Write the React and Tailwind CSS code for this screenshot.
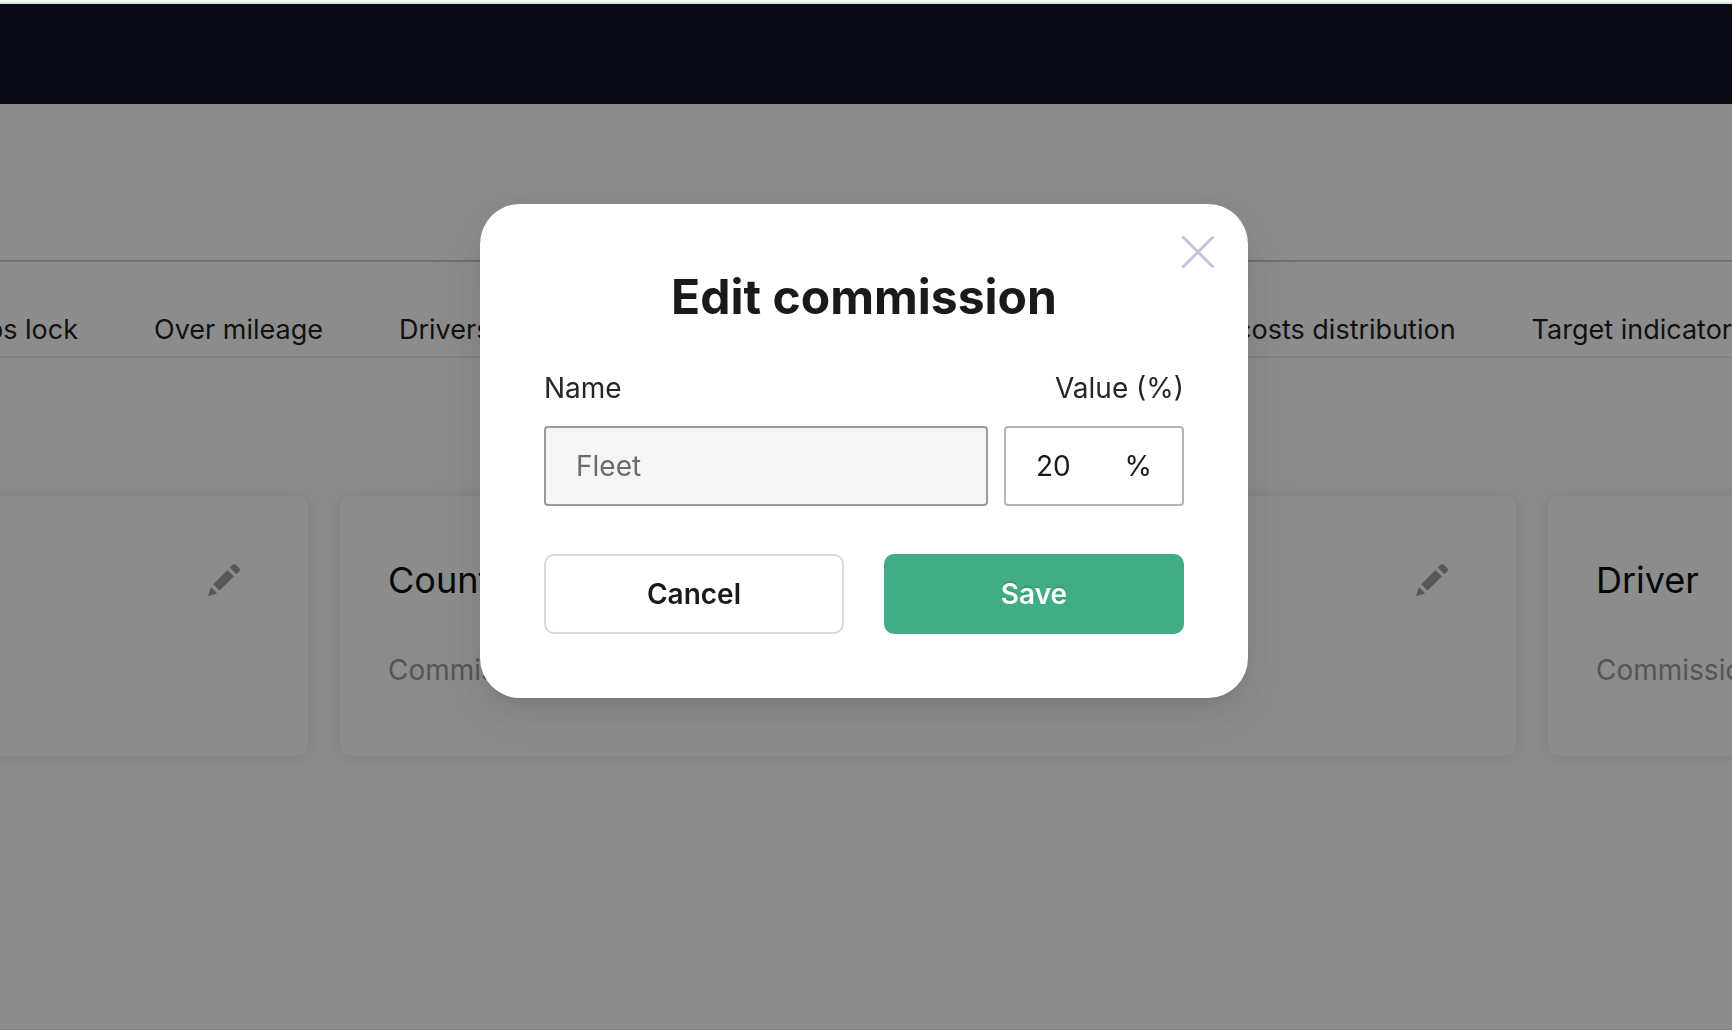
import { useState } from "react";

const leftTabs = ["Over mileage", "Drivers"];
const rightTabs = ["costs distribution", "Target indicator"];

function PencilIcon() {
  return (
    <svg viewBox="0 0 32 32" className="size-8 fill-[#9f9f9f]" aria-hidden="true">
      <path d="M5.3 20.2 19.6 6l6.2 6.3L11.6 26.6z" />
      <path d="M3 23 9.1 29.6 0 32z" />
      <path d="M21.8 3.6 24 1.2Q26 -.9 28.3 .9L31.2 3.9Q32.9 5.8 31 7.7L28.2 10.3z" />
    </svg>
  );
}

function CloseIcon() {
  return (
    <svg viewBox="0 0 32 32" className="size-8" aria-hidden="true">
      <path d="M1.5 1.5 30.5 30.5M30.5 1.5 1.5 30.5" stroke="#c0c4d6" strokeWidth="3" strokeLinecap="round" />
    </svg>
  );
}

function Card({ title, editable, className }) {
  return (
    <article className={`flex items-start justify-between overflow-hidden bg-white pt-14 pr-17 pb-[66px] pl-12 shadow-[0_0_16px_rgba(0,0,0,0.12)] ${className}`}>
      <div className="whitespace-nowrap">
        <h2 className="min-h-14 text-4xl leading-14 text-[#000b0b]">{title}</h2>
        <p className="mt-[42px] min-h-10 text-[28px] leading-10 text-[#9b9b9b]">{title && "Commission"}</p>
      </div>
      {editable && (
        <button type="button" aria-label="Edit" className="mt-3">
          <PencilIcon />
        </button>
      )}
    </article>
  );
}

export default function App() {
  const [value, setValue] = useState("20");

  return (
    <div className="min-h-screen overflow-hidden bg-white font-['Inter',sans-serif]">
      {/* top strip + header */}
      <div className="h-1 border-b-2 border-[#d9e6dd] bg-[#f0fdf4]"></div>
      <header className="h-25 bg-[#0f172a]"></header>

      {/* title row */}
      <div className="h-[158px] border-b-2 border-[#ccc]"></div>

      {/* tabs */}
      <nav className="flex justify-between overflow-hidden border-b-2 border-[#ececec] pt-[46px] pb-1 text-[27px] leading-11 whitespace-nowrap text-[#1f1f1f]">
        <div className="flex gap-19">
          <a href="#lock" className="flex w-[78px] justify-end">ps lock</a>
          {leftTabs.map((tab) => (
            <a key={tab} href="#tab">{tab}</a>
          ))}
        </div>
        <div className="flex gap-19">
          {rightTabs.map((tab) => (
            <a key={tab} href="#tab">{tab}</a>
          ))}
        </div>
      </nav>

      {/* commission cards, the outer two run off the page */}
      <main className="-mx-8 mt-[138px] flex gap-8">
        <Card editable className="w-85 shrink-0 rounded-[10px]" />
        <Card title="Country" editable className="flex-1 rounded-[10px]" />
        <Card title="Driver" className="w-54 shrink-0 rounded-[10px]" />
      </main>

      {/* modal */}
      <div className="fixed inset-x-0 top-1 bottom-0 flex items-start justify-center border-b border-purple-950/10 bg-black/45 pt-50 pr-1">
        <div
          role="dialog"
          aria-labelledby="modal-title"
          className="relative w-full max-w-3xl rounded-[40px] bg-white p-16 shadow-[0_12px_32px_rgba(0,0,0,0.08),0_6px_12px_-8px_rgba(0,0,0,0.12),0_18px_56px_16px_rgba(0,0,0,0.05)]"
        >
          <button type="button" aria-label="Close" className="absolute top-8 right-8 flex size-9 justify-center">
            <CloseIcon />
          </button>

          <h1 id="modal-title" className="mb-10 text-center text-5xl leading-[58px] font-bold text-[#1a1a1a]">
            Edit commission
          </h1>

          <form onSubmit={(e) => e.preventDefault()} className="text-[28px] text-[#1a1a1a]">
            <div className="mb-4 flex justify-between leading-11 text-[#262626]">
              <label htmlFor="name">Name</label>
              <label htmlFor="value">Value (%)</label>
            </div>

            <div className="flex gap-4">
              <input
                id="name"
                disabled
                defaultValue="Fleet"
                className="h-20 min-w-0 flex-1 rounded-sm border-2 border-[#999] bg-[#f5f5f5] px-[30px] text-[#6b6b6b]"
              />
              <div className="flex h-20 w-45 items-center justify-between rounded-sm border-2 border-[#b3b3b3] px-[30px]">
                <input
                  id="value"
                  value={value}
                  onChange={(e) => setValue(e.target.value)}
                  className="w-16 outline-none"
                />
                <span>%</span>
              </div>
            </div>

            <div className="mt-12 grid grid-cols-2 gap-10 font-semibold">
              <button type="button" className="h-20 rounded-[10px] border-2 border-[#d9d9d9]">
                Cancel
              </button>
              <button type="submit" className="h-20 rounded-[10px] bg-[#40ad85] text-white [text-shadow:0_-2px_0_rgba(0,0,0,0.12)]">
                Save
              </button>
            </div>
          </form>
        </div>
      </div>
    </div>
  );
}
